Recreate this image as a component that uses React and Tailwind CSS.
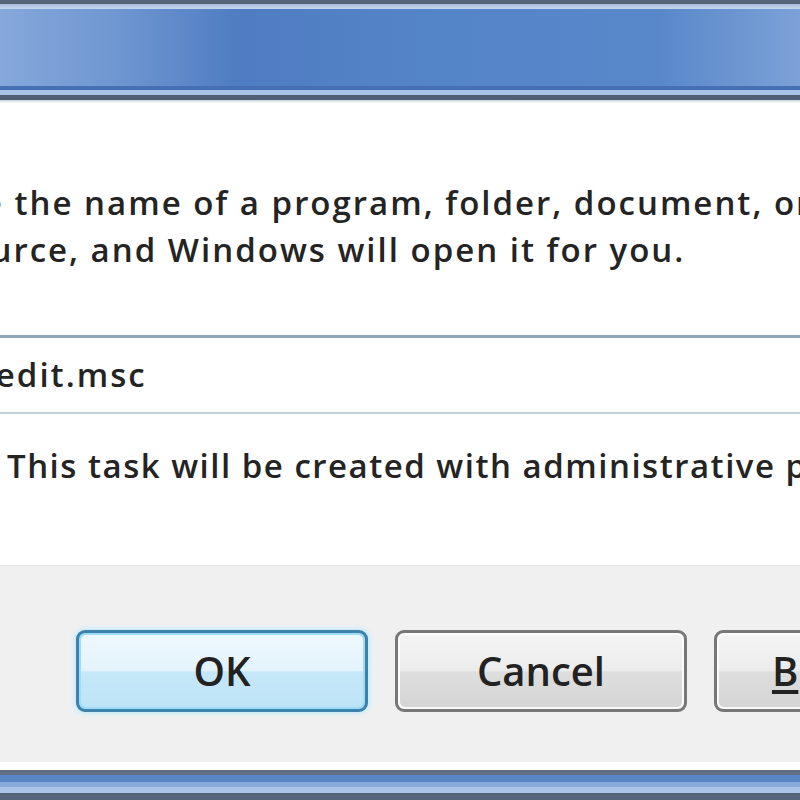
import React from 'react';

// Zoomed crop of the Windows 7 "Run" dialog
const Win7Button = ({ children, primary }) => (
  <div
    className={`shrink-0 w-[292px] h-[82px] rounded-[9px] border-[3px] p-[2px] ${
      primary
        ? 'border-[#3d82aa] bg-[#9fdcf5] shadow-[0_0_4px_2px_#c8ecfb]'
        : 'border-[#777777] bg-[#fbfbfb]'
    }`}
  >
    <div
      className={`h-full rounded-[5px] flex items-center justify-center text-[40px] font-semibold text-[#222222] ${
        primary
          ? 'bg-[linear-gradient(180deg,#eef8fd_0%,#e3f3fc_50%,#c6e8f8_51%,#bde4f6_100%)]'
          : 'bg-[linear-gradient(180deg,#f4f4f4_0%,#ececec_50%,#dedede_51%,#d5d5d5_100%)]'
      }`}
    >
      {children}
    </div>
  </div>
);

export default function App() {
  return (
    <div className="w-[800px] h-[800px] overflow-hidden flex flex-col bg-white font-['Open_Sans','Noto_Sans',sans-serif] text-[#242424]">
      {/* title bar frame */}
      <div className="shrink-0 flex flex-col">
        <div className="h-[4px] bg-[#56647a]" />
        <div className="h-[5px] bg-[linear-gradient(180deg,#a7bcdb,#c6d8f0)]" />
        <div className="h-[77px] bg-[linear-gradient(90deg,#86a8db_0%,#7097d1_14%,#4f7cc2_30%,#5585c9_55%,#5887ca_82%,#7ca1d7_100%)]" />
        <div className="h-[4px] bg-[#4670b3]" />
        <div className="h-[5px] bg-[#a9c3e7]" />
        <div className="h-[5px] bg-[#515f74]" />
        <div className="h-[3px] bg-[linear-gradient(180deg,#c9d0da,#ffffff)]" />
      </div>

      {/* dialog body */}
      <div className="shrink-0 h-[462px] pt-[76px] overflow-hidden font-semibold tracking-[2px] text-[33px] leading-[47px]">
        <p className="whitespace-nowrap">
          <span className="block -ml-[80px]">Type the name of a program, folder, document, or Internet</span>
          <span className="block -ml-[87px]">resource, and Windows will open it for you.</span>
        </p>

        <div className="mt-[62px] -ml-[47px] w-[900px] h-[79px] border-t-[3px] border-b-[2px] border-t-[#90a6bd] border-b-[#c3d1df] bg-white pt-[13px]">
          <span className="block whitespace-nowrap">gpedit.msc</span>
        </div>

        <p className="mt-[28px] pl-[7px] whitespace-nowrap tracking-[1.5px]">
          This task will be created with administrative privileges.
        </p>
      </div>

      {/* button strip */}
      <div className="shrink-0 h-[197px] bg-[#f0f0f0] border-t border-[#e6e6e6] pt-[64px] pl-[76px] flex items-start gap-[27px]">
        <Win7Button primary>OK</Win7Button>
        <Win7Button>Cancel</Win7Button>
        <Win7Button>
          <span>
            <span className="underline underline-offset-4">B</span>rowse...
          </span>
        </Win7Button>
      </div>

      {/* bottom frame */}
      <div className="shrink-0 flex flex-col">
        <div className="h-[8px] bg-white" />
        <div className="h-[5px] bg-[#606f84]" />
        <div className="h-[7px] bg-[#5a86c8]" />
        <div className="h-[5px] bg-[#88a9da]" />
        <div className="h-[6px] bg-[#aac3e6]" />
        <div className="h-[7px] bg-[#56657b]" />
      </div>
    </div>
  );
}
